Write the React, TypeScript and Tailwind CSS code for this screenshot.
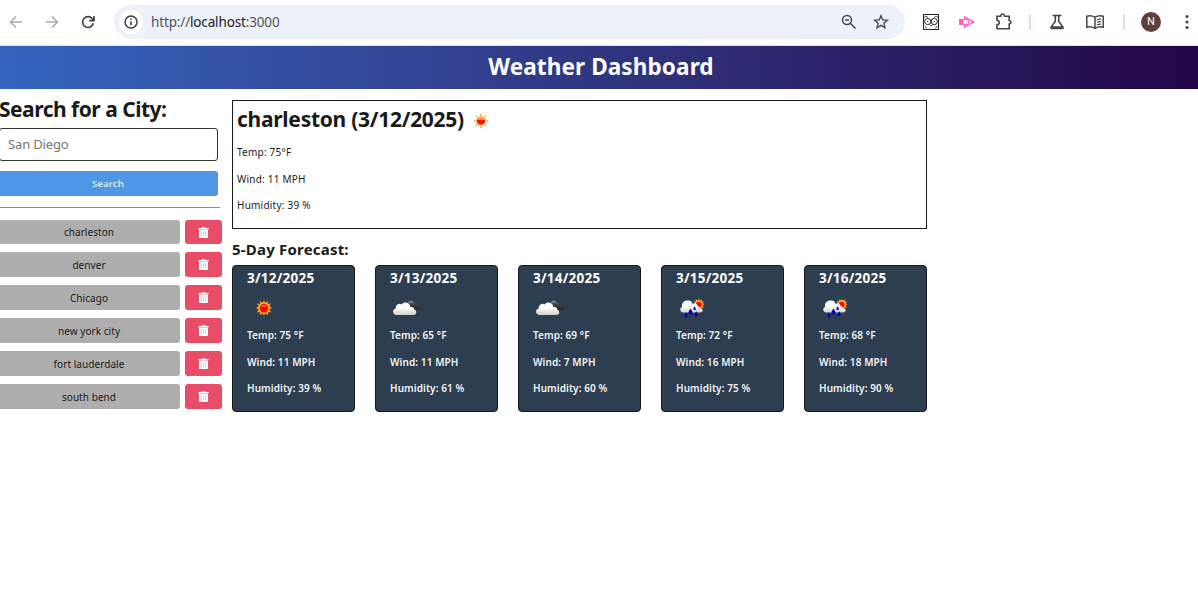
import React from 'react';

const cities = ['charleston', 'denver', 'Chicago', 'new york city', 'fort lauderdale', 'south bend'];

type Sky = 'sun' | 'clouds' | 'rain';

const forecast: { date: string; sky: Sky; temp: number; wind: number; humidity: number }[] = [
  { date: '3/12/2025', sky: 'sun', temp: 75, wind: 11, humidity: 39 },
  { date: '3/13/2025', sky: 'clouds', temp: 65, wind: 11, humidity: 61 },
  { date: '3/14/2025', sky: 'clouds', temp: 69, wind: 7, humidity: 60 },
  { date: '3/15/2025', sky: 'rain', temp: 72, wind: 16, humidity: 75 },
  { date: '3/16/2025', sky: 'rain', temp: 68, wind: 18, humidity: 90 },
];

const rays =
  'M8 0l1.200 2.600L12.200 1l-.3 2.900 3.300-.6-1.700 2.800L16 8l-2.500 1.600 1.700 3-3.200-.5.200 3.100-3-1.700L8 16l-1.400-2.500-2.900 1.700.3-3.100-3.200.5 1.700-3L0 8l2.500-1.900L.8 3.300l3.300.6L3.800 1l3 1.600z';

function SunIcon() {
  return (
    <svg className="block h-4 w-4 shrink-0" viewBox="0 0 16 16">
      <path d={rays} fill="#f5991f" />
      <circle cx="8" cy="8" r="5" fill="#ffb45a" />
      <circle cx="8" cy="8.100" r="4.300" fill="#fc0a00" />
      <path d="M4.700 6.800a3.600 3.600 0 0 1 6.600 0q-3.300.8-6.600 0z" fill="#ff5a38" />
    </svg>
  );
}

function SmallSun() {
  return (
    <svg className="block h-4 w-4 shrink-0" viewBox="0 0 16 16">
      <g stroke="#ffa32b" strokeWidth="1.500">
        <path d="M8 .7v2M8 13.300v2M.7 8h2M13.300 8h2M3 3l1.300 1.300M11.700 11.700L13 13M13 3l-1.300 1.300M4.300 11.700L3 13" />
      </g>
      <circle cx="8" cy="8" r="4.700" fill="#ffa53a" />
      <path d="M4 6.600q4 1 8 0a4.100 4.100 0 1 1-8 0z" fill="#ff0b00" />
    </svg>
  );
}

function CloudsIcon() {
  return (
    <svg className="block h-5 w-[30px]" viewBox="0 0 30 20">
      <defs>
        <linearGradient id="cloudFill" x1="0" y1="0" x2="0" y2="1">
          <stop offset=".4" stopColor="#fff" />
          <stop offset="1" stopColor="#cfcfcf" />
        </linearGradient>
        <linearGradient id="darkCloud" x1="0" y1="0" x2="0" y2="1">
          <stop offset="0" stopColor="#777" />
          <stop offset=".35" stopColor="#464646" />
          <stop offset="1" stopColor="#242424" />
        </linearGradient>
      </defs>
      <path d="M15 7C15.500 2.500 21 2 22.700 5.300c2.200-.6 3.800.5 4 2.200 3.400.3 3.800 4 .4 4.300H19z" fill="url(#darkCloud)" />
      <path d="M16 4.600q2.200-2.400 4.700-1" stroke="#aaa" fill="none" strokeWidth=".8" />
      <path d="M4.500 17C.3 17-.1 11.200 3.700 10.500 3.300 6.800 7.300 4.600 9.700 6.400c2.800-3.500 8.300-1.500 8.600 2.600 2.400-.5 4.200.8 4 2.700 3 .7 2.500 5.300-.8 5.300z" fill="url(#cloudFill)" />
    </svg>
  );
}

function RainIcon() {
  return (
    <svg className="block h-5 w-[30px]" viewBox="0 0 30 20">
      <defs>
        <linearGradient id="rainCloud" x1="0" y1="0" x2="0" y2="1">
          <stop offset=".45" stopColor="#fff" />
          <stop offset="1" stopColor="#d2d2d2" />
        </linearGradient>
      </defs>
      <g transform="translate(15 .6) scale(.72)">
        <path d={rays} fill="#f99b22" />
        <circle cx="8" cy="8" r="4.900" fill="#ffb054" />
        <circle cx="8" cy="8.500" r="4" fill="#fb0c00" />
      </g>
      <path d="M3.500 14.500C.2 14.300-.3 9.600 2.500 9 1.800 5 4.500 2.300 8 2.500c2.600-.6 4.800 1.200 4.900 3.500 2.300-1.800 4.600-.6 5 1.800 1.700.1 2.300 1 2.200 2.200 4 .2 4 4.500.4 4.500z" fill="url(#rainCloud)" transform="translate(1.600 .1)" />
      <g fill="#0000b4">
        <path d="M12.500 10.500q-2 2.800-2 4a2 2 0 0 0 4 0q0-1.200-2-4z" />
        <path d="M8.100 14.500q-1.500 2.200-1.500 3.200a1.500 1.500 0 0 0 3 0q0-1-1.500-3.200z" />
        <path d="M18.200 13.200q-1.600 2.300-1.600 3.500a1.600 1.600 0 0 0 3.200 0q0-1.200-1.600-3.500z" />
        <path d="M16.600 8.200q-1.200 1.900-1.200 2.700a1.200 1.200 0 0 0 2.400 0q0-.8-1.200-2.700z" />
      </g>
    </svg>
  );
}

function SkyIcon({ sky }: { sky: Sky }) {
  if (sky === 'sun') return <div className="pt-0.5 pl-[7px]"><SunIcon /></div>;
  return sky === 'clouds' ? <CloudsIcon /> : <RainIcon />;
}

function TrashIcon() {
  return (
    <svg className="block h-[11px] w-[11px]" viewBox="0 0 11 11">
      <path d="M.3 1h3L3.800.2h3.400L7.700 1h3v1.200H.3z" fill="#fff" />
      <path d="M1 2.500h9v7.400q0 1.100-1.100 1.100H2.100Q1 11 1 9.900z" fill="#fff" />
      <path d="M3.500 4.200v5.300M5.500 4.200v5.300M7.500 4.200v5.300" stroke="#f5b3be" strokeWidth=".8" />
    </svg>
  );
}

function BrowserBar() {
  return (
    <div className="flex h-[46px] items-start border-b border-[#dfe3e1] bg-white text-[#474747]">
      <div className="flex h-11 w-[114px] shrink-0 items-center pl-[9px]">
        <svg className="h-[14px] w-[14px]" viewBox="0 0 14 14" fill="none" stroke="#aaa" strokeWidth="1.500">
          <path d="M13 7H1.500M7 1.500L1.500 7 7 12.500" />
        </svg>
        <svg className="ml-[22px] h-[14px] w-[14px]" viewBox="0 0 14 14" fill="none" stroke="#aaa" strokeWidth="1.500">
          <path d="M1 7h11.500M7 1.500L12.500 7 7 12.500" />
        </svg>
        <svg className="ml-[22px] h-[14px] w-[14px]" viewBox="0 0 14 14" fill="none" stroke="#444" strokeWidth="1.700">
          <path d="M12.300 8.300A5.400 5.400 0 1 1 11.500 4L13 5.500M13 1v4.600H8.300" />
        </svg>
      </div>
      <div className="mt-[5px] flex h-[34px] w-[791px] shrink-0 items-center rounded-full bg-[#ecf1fa] pl-[5px]">
        <div className="flex h-6 w-6 items-center justify-center rounded-full bg-white">
          <svg className="h-[14px] w-[14px]" viewBox="0 0 14 14" fill="none" stroke="#3c3c3c" strokeWidth="1.500">
            <circle cx="7" cy="7" r="6" />
            <path d="M7 6.200v4M7 3.500V5" />
          </svg>
        </div>
        <div className="ml-2 flex-1 font-['Noto_Sans','Open_Sans',sans-serif] text-[13.500px] leading-5 tracking-[-0.150px] text-[#555]">
          http://<span className="text-[#202124]">localhost</span>:3000
        </div>
        <svg className="mr-4 h-4 w-4" viewBox="0 0 16 16" fill="none" stroke="#474747" strokeWidth="1.500">
          <circle cx="6" cy="6" r="4.500" />
          <path d="M9.300 9.300l5.200 5.200M4 6h4" />
        </svg>
        <svg className="mr-4 h-4 w-4" viewBox="0 0 16 16" fill="none" stroke="#474747" strokeWidth="1.400">
          <path d="M8 1.700l1.750 4.250 4.600.35-3.500 3 1.100 4.500L8 11.400l-3.950 2.400 1.100-4.500-3.500-3 4.600-.35z" />
        </svg>
      </div>
      <div className="flex h-11 flex-1 items-center">
        <svg className="ml-[18px] h-4 w-4" viewBox="0 0 16 16" fill="none" stroke="#222" strokeWidth="1">
          <rect x=".5" y=".5" width="15" height="15" />
          <path d="M1 3.500L3 2l2 1.500M11 3.500L13 2l2 1.500M6.500 10.500L8 12l1.500-1.500M2 12l1.500 2.500M14 12l-1.500 2.500" strokeWidth=".8" />
          <circle cx="4.700" cy="7.500" r="3.100" />
          <circle cx="11.300" cy="7.500" r="3.100" />
          <path d="M4 7.500h1.300M10.700 7.500H12" strokeWidth="1" />
        </svg>
        <svg className="ml-5 h-[14px] w-4" viewBox="0 0 16 14">
          <path d="M0 4h4.500v6H0z" fill="#ff62bd" />
          <path d="M5.500 1v3M5.500 10v3M5.500 1.500L14.500 7l-9 5.500M4.500 4.500H9M4.500 9.500H9" fill="none" stroke="#ff62bd" strokeWidth="1.300" />
          <path d="M9 4.500L11 7 9 9.500M12 5l4 2-4 2z" fill="#ff62bd" />
        </svg>
        <svg className="ml-5 h-[18px] w-[18px]" viewBox="0 0 18 18" fill="none" stroke="#474747" strokeWidth="1.600">
          <path d="M2 3.200h3.700Q5.900 1 7.600 1t1.900 2.200h4.700v4.400q1.800.2 1.800 1.700t-1.800 1.700v4.700H2v-3.900q2.300-.5 2.300-2.300T2 7.200z" />
        </svg>
        <div className="ml-4 h-4 w-0.5 rounded bg-[#cfe0fa]" />
        <svg className="ml-[18px] h-4 w-4" viewBox="0 0 16 16" fill="none" stroke="#474747" strokeWidth="1.600">
          <path d="M3.500 1.500h9M6.300 2v5.200L2 13.300q-.5 1.100.7 1.100h10.600q1.200 0 .7-1.100L9.700 7.200V2M3.500 13h9" />
        </svg>
        <svg className="ml-5 h-4 w-5" viewBox="0 0 20 16" fill="none" stroke="#474747" strokeWidth="1.500">
          <path d="M10 3.200Q6 .9 1.800 2.200v11.100Q6 12 10 14.300 14 12 18.200 13.300V2.200Q14 .9 10 3.200zM10 3v11" />
          <path d="M12 5.700q2-.8 4-.5M12 8.200q2-.8 4-.5M12 10.700q2-.8 4-.5" strokeWidth="1.100" />
        </svg>
        <div className="ml-[18px] h-4 w-0.5 rounded bg-[#cfe0fa]" />
        <div className="ml-4 flex h-5 w-5 items-center justify-center rounded-full bg-[#5d4037] font-[Roboto,sans-serif] text-[11px] text-white">N</div>
        <svg className="ml-6 h-4 w-1" viewBox="0 0 4 16" fill="#474747">
          <circle cx="2" cy="2.500" r="1.600" />
          <circle cx="2" cy="8" r="1.600" />
          <circle cx="2" cy="13.500" r="1.600" />
        </svg>
      </div>
    </div>
  );
}

export default function App() {
  return (
    <div className="h-[606px] overflow-hidden bg-white font-['Noto_Sans','Open_Sans',sans-serif] text-[#1a1a1a]">
      <BrowserBar />
      <header className="flex h-[43px] items-center justify-center bg-linear-to-r from-[#3366bf] to-[#210548] pl-1">
        <h1 className="text-[22.500px] leading-none font-bold tracking-[0.120px] text-white">Weather Dashboard</h1>
      </header>
      <div className="flex">
        <aside className="w-[232px] shrink-0 pt-2">
          <h2 className="-ml-px h-[31px] text-[21px] leading-6 font-bold tracking-[-0.500px] whitespace-nowrap">Search for a City:</h2>
          <input
            className="-ml-px block h-[33px] w-[219px] rounded-[3px] border border-[#333] pb-0.5 pl-2 text-[13px] tracking-[-0.150px] placeholder:text-[#757575]"
            placeholder="San Diego"
          />
          <button className="-ml-0.5 mt-2.5 block h-[25px] w-[220px] rounded-[3px] bg-[#4f97e6] pt-px text-[9.600px] font-semibold tracking-[0.100px] text-[#d2e9f7]">Search</button>
          <hr className="mt-[11px] w-[220px] border-[#8e8e8e]" />
          <div className="mt-3 flex flex-col gap-2">
            {cities.map((city) => (
              <div key={city} className="flex h-[25px] gap-[5px] first:h-6">
                <button className="-ml-0.5 w-[182px] rounded-[3px] bg-[#aeaeae] pt-px text-[10px] tracking-[0.060px]">{city}</button>
                <button className="flex w-[37px] items-center justify-center rounded-[3px] bg-[#e84c66]">
                  <TrashIcon />
                </button>
              </div>
            ))}
          </div>
        </aside>
        <main className="w-[695px] shrink-0 pt-[11px]">
          <section className="h-[129px] border border-[#1a1a1a] pt-[5px] pl-1">
            <div className="flex h-[26px] items-center">
              <h2 className="text-[21px] leading-6 font-bold tracking-[-0.270px] whitespace-nowrap">charleston (3/12/2025)</h2>
              <div className="mt-[3px] ml-[9px]"><SmallSun /></div>
            </div>
            <div className="mt-[13px] flex flex-col gap-[12.500px] text-[10px] leading-[14px] tracking-[0.220px]">
              <p>Temp: 75°F</p>
              <p>Wind: 11 MPH</p>
              <p>Humidity: 39 %</p>
            </div>
          </section>
          <h3 className="mt-2.5 h-[26px] text-[15px] leading-5 font-bold tracking-[0.200px]">5-Day Forecast:</h3>
          <div className="flex gap-5">
            {forecast.map((day) => (
              <article key={day.date} className="h-[147px] w-[123px] rounded-[4px] border border-[#171a1d] bg-[#2d3e50] pl-3.5 text-white">
                <h4 className="mt-0.5 text-[13.500px] leading-5 font-bold tracking-[0.250px]">{day.date}</h4>
                <div className="mt-2.5 ml-0.5 h-5"><SkyIcon sky={day.sky} /></div>
                <div className="mt-2.5 flex flex-col gap-[12.500px] text-[10px] leading-[14px] font-semibold tracking-[0.080px] text-[#f2f4f5]">
                  <p>Temp: {day.temp} °F</p>
                  <p>Wind: {day.wind} MPH</p>
                  <p>Humidity: {day.humidity} %</p>
                </div>
              </article>
            ))}
          </div>
        </main>
      </div>
    </div>
  );
}
